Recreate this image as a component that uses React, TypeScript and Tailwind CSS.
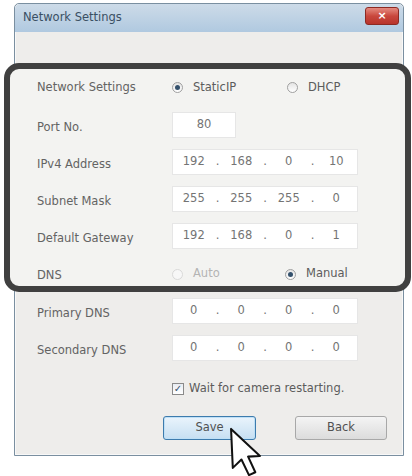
import React from "react";

const font = { fontFamily: '"DejaVu Sans", Verdana, sans-serif' };

function Radio({ checked, dim }: { checked?: boolean; dim?: boolean }) {
  return (
    <span
      className={`flex h-[11px] w-[11px] items-center justify-center rounded-full border ${
        dim ? "border-[#d9d9d9] bg-[#f7f7f7]" : "border-[#a0a0a0] bg-gradient-to-b from-[#e4e4e4] to-[#ffffff]"
      }`}
    >
      {checked && <span className="h-[5px] w-[5px] rounded-full bg-[#34516c]" />}
    </span>
  );
}

function Option({ label, checked, dim, width }: { label: string; checked?: boolean; dim?: boolean; width?: string }) {
  return (
    <div className={`flex items-center ${width ?? ""}`}>
      <Radio checked={checked} dim={dim} />
      <span className={`ml-[10px] ${dim ? "text-[#b4b4b4]" : "text-[#5c5c5c]"}`}>{label}</span>
    </div>
  );
}

function IpBox({ parts }: { parts: string[] }) {
  return (
    <div className="flex h-[26px] w-[186px] items-center border border-[#e6e6e6] bg-white text-[#747474]">
      {parts.map((p, i) => (
        <React.Fragment key={i}>
          {i > 0 && <span className="w-[6px] text-center">.</span>}
          <span className="w-[42px] text-center">{p}</span>
        </React.Fragment>
      ))}
    </div>
  );
}

function Row({ label, children, h = "h-[37px]" }: { label: string; children: React.ReactNode; h?: string }) {
  return (
    <div className={`flex items-center ${h}`}>
      <span className="mt-[6px] w-[135px] shrink-0 text-[#636363]">{label}</span>
      {children}
    </div>
  );
}

function Cursor() {
  return (
    <svg
      className="absolute left-[227px] top-[426px]"
      width="37"
      height="52"
      viewBox="0 0 12 18"
      fill="#fff"
      stroke="#111"
      strokeWidth="0.7"
      strokeLinejoin="round"
    >
      <path d="M1 1 L1.6 14.5 L4.6 11.6 L7.2 17 L9.4 16 L6.9 10.6 L11 10.4 Z" />
    </svg>
  );
}

export default function App() {
  return (
    <div className="relative h-[476px] w-[412px] overflow-hidden bg-white text-[11.5px]" style={font}>
      <div className="ml-[14px] mt-[3px] w-[390px] rounded-t-[5px] border border-[#7a8fa0] bg-[#eeedeb] shadow-[inset_0_0_0_1px_#f8f8f8]">
        {/* title bar */}
        <div className="flex h-[28px] items-center justify-between rounded-t-[5px] bg-gradient-to-b from-[#cddbe8] to-[#b0c9e0] pl-[8px] pr-[4px]">
          <span className="text-[11.5px] text-[#3a4f63]">Network Settings</span>
          <div className="mb-[4px] flex h-[18px] w-[34px] items-center justify-center rounded-[3px] border border-[#8c2a23] bg-gradient-to-b from-[#e48a80] via-[#c9473d] to-[#b8342b] text-[11px] font-bold text-white">
            ×
          </div>
        </div>

        <div className="h-[31px]" />

        {/* highlighted group */}
        <div className="-ml-[11px] -mr-[8px] rounded-[15px] border-[6px] border-[#404040] bg-[#f3f3f1] pl-[27px]">
          <div className="flex h-[37px] items-center">
            <span className="w-[135px] shrink-0 text-[#636363]">Network Settings</span>
            <Option label="StaticIP" checked width="w-[115px]" />
            <Option label="DHCP" />
          </div>
          <Row label="Port No.">
            <div className="flex h-[26px] w-[64px] items-center justify-center border border-[#e6e6e6] bg-white text-[#747474]">
              80
            </div>
          </Row>
          <Row label="IPv4 Address">
            <IpBox parts={["192", "168", "0", "10"]} />
          </Row>
          <Row label="Subnet Mask">
            <IpBox parts={["255", "255", "255", "0"]} />
          </Row>
          <Row label="Default Gateway">
            <IpBox parts={["192", "168", "0", "1"]} />
          </Row>
          <div className="flex h-[32px] items-center">
            <span className="mt-[12px] w-[135px] shrink-0 text-[#636363]">DNS</span>
            <div className="mt-[8px] flex items-center">
              <Option label="Auto" dim width="w-[113px]" />
              <Option label="Manual" checked />
            </div>
          </div>
        </div>

        <div className="pl-[22px]">
          <Row label="Primary DNS">
            <IpBox parts={["0", "0", "0", "0"]} />
          </Row>
          <Row label="Secondary DNS">
            <IpBox parts={["0", "0", "0", "0"]} />
          </Row>
          <div className="flex h-[46px] items-center pl-[135px]">
            <span className="flex h-[12px] w-[12px] items-center justify-center border border-[#8a8a8a] bg-gradient-to-b from-[#e8ecf2] to-white text-[10px] leading-none text-[#34516c]">
              ✓
            </span>
            <span className="ml-[5px] text-[#5c5c5c]">Wait for camera restarting.</span>
          </div>
        </div>

        <div className="flex gap-[39px] pb-[15px] pl-[148px] pt-[4px]">
          <button className="h-[24px] w-[93px] rounded-[3px] border border-[#3d7bad] bg-gradient-to-b from-[#eaf4fc] to-[#c6dff2] text-[#505050] shadow-[inset_0_0_0_1px_#bfe0f6]">
            Save
          </button>
          <button className="h-[24px] w-[92px] rounded-[3px] border border-[#a8a8a8] bg-gradient-to-b from-[#f4f4f4] to-[#dcdcdc] text-[#505050]">
            Back
          </button>
        </div>
      </div>
      <Cursor />
    </div>
  );
}
